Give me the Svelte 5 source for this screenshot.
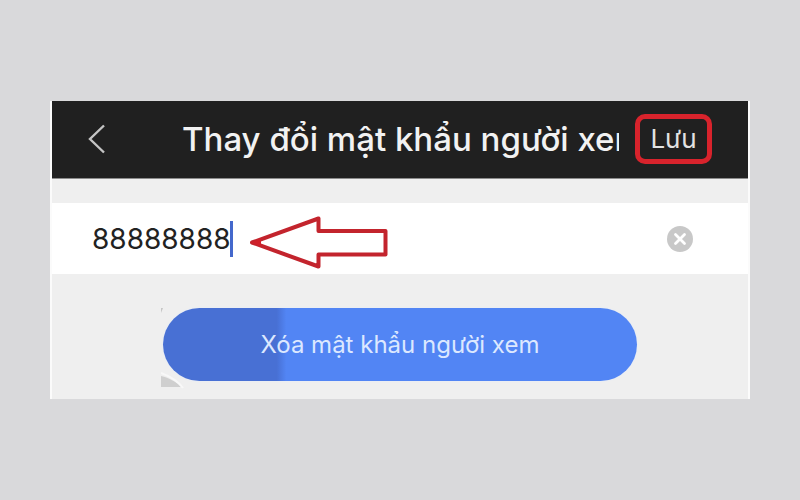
<script>
  let password = $state('88888888');

  function clear() {
    password = '';
  }
</script>

<main class="screen">
  <header class="bar">
    <button class="back" type="button" aria-label="Quay lại">
      <svg width="18" height="30" viewBox="0 0 18 30" fill="none">
        <path d="M16 1.500 2 15 16 28.500" stroke="#c4c4c4" stroke-width="2.400" />
      </svg>
    </button>
    <h1>Thay đổi mật khẩu người xem</h1>
    <button class="save" type="button">Lưu</button>
  </header>

  <div class="field">
    <input type="text" aria-label="Mật khẩu người xem" bind:value={password} />
    <span class="caret"></span>
    <svg class="arrow" width="140" height="54" viewBox="0 0 140 54" fill="none">
      <path
        d="M3 27.500 69.500 3.500V16H136.500V39.500H69.500V51.500Z"
        stroke="#c3242d"
        stroke-width="4"
        stroke-linejoin="round"
      />
      <path d="M2 27.500 12 23.500V31.500Z" fill="#d0202a" />
    </svg>
    <button class="clear" type="button" aria-label="Xóa" onclick={clear}>
      <svg width="26" height="26" viewBox="0 0 26 26">
        <circle cx="13" cy="13" r="13" fill="#c8c8c8" />
        <path d="M8.500 8.500 17.500 17.500M17.500 8.500 8.500 17.500" stroke="#fff" stroke-width="2.800" stroke-linecap="round" />
      </svg>
    </button>
  </div>

  <div class="actions">
    <div class="wrap">
      <svg class="smudge" width="24" height="84" viewBox="0 0 24 84">
        <path d="M0 68C8 70 16 74 20 79L0 79Z" fill="#cfcfcf" />
        <path d="M0 65C8 68 17 73 22 80" fill="none" stroke="#f8f8f8" stroke-width="2" />
        <path d="M0 0H2L0 5Z" fill="#c6c6c6" />
      </svg>
      <button class="remove" type="button">Xóa mật khẩu người xem</button>
    </div>
  </div>
</main>

<style>
  :global(body) {
    margin: 0;
    background: #d9d9db;
  }

  .screen {
    margin: 101px 50px;
    background: #efefef;
    border: solid #fbfbfb;
    border-width: 0 2px;
    font-family: Inter, Roboto, sans-serif;
  }

  button {
    margin: 0;
    padding: 0;
    border: 0;
    background: none;
    font-family: inherit;
    cursor: pointer;
  }

  svg {
    display: block;
  }

  .bar {
    display: flex;
    align-items: center;
    height: 75px;
    padding: 0 36px 2px;
    border-bottom: 1px solid #8c8c8c;
    background: #202020;
  }

  .back {
    flex: none;
    width: 94px;
  }

  h1 {
    flex: 1;
    min-width: 0;
    margin: 0 16px 0 0;
    overflow: hidden;
    color: #f2f2f2;
    font-size: 33px;
    font-weight: 500;
    line-height: 48px;
    white-space: nowrap;
  }

  .save {
    flex: none;
    width: 77px;
    height: 50px;
    border: 5px solid #d8232c;
    border-radius: 10px;
    color: #e2e2e2;
    font-size: 26px;
  }

  .field {
    display: flex;
    align-items: center;
    height: 71px;
    margin-top: 24px;
    padding: 0 55px 0 40px;
    background: #fff;
  }

  input {
    box-sizing: content-box;
    width: 8ch;
    padding: 0;
    border: 0;
    outline: 0;
    background: none;
    color: #222;
    font-family: inherit;
    font-size: 28px;
    line-height: 36px;
  }

  .caret {
    width: 3px;
    height: 36px;
    margin-left: -3px;
    background: #4468cc;
  }

  .arrow {
    margin: 6px 0 0 16px;
  }

  .clear {
    margin-left: auto;
  }

  .actions {
    display: flex;
    justify-content: center;
    padding: 34px 0 18px;
  }

  .wrap {
    position: relative;
    width: 68%;
  }

  .smudge {
    position: absolute;
    top: 0;
    left: -2px;
  }

  .remove {
    position: relative;
    display: block;
    width: 100%;
    height: 73px;
    border-radius: 37px;
    background: linear-gradient(90deg, #4870d4 24%, #5285f4 26%);
    box-shadow: 0 0 2px #dfeaff;
    color: #dce8ff;
    font-size: 24px;
  }
</style>
